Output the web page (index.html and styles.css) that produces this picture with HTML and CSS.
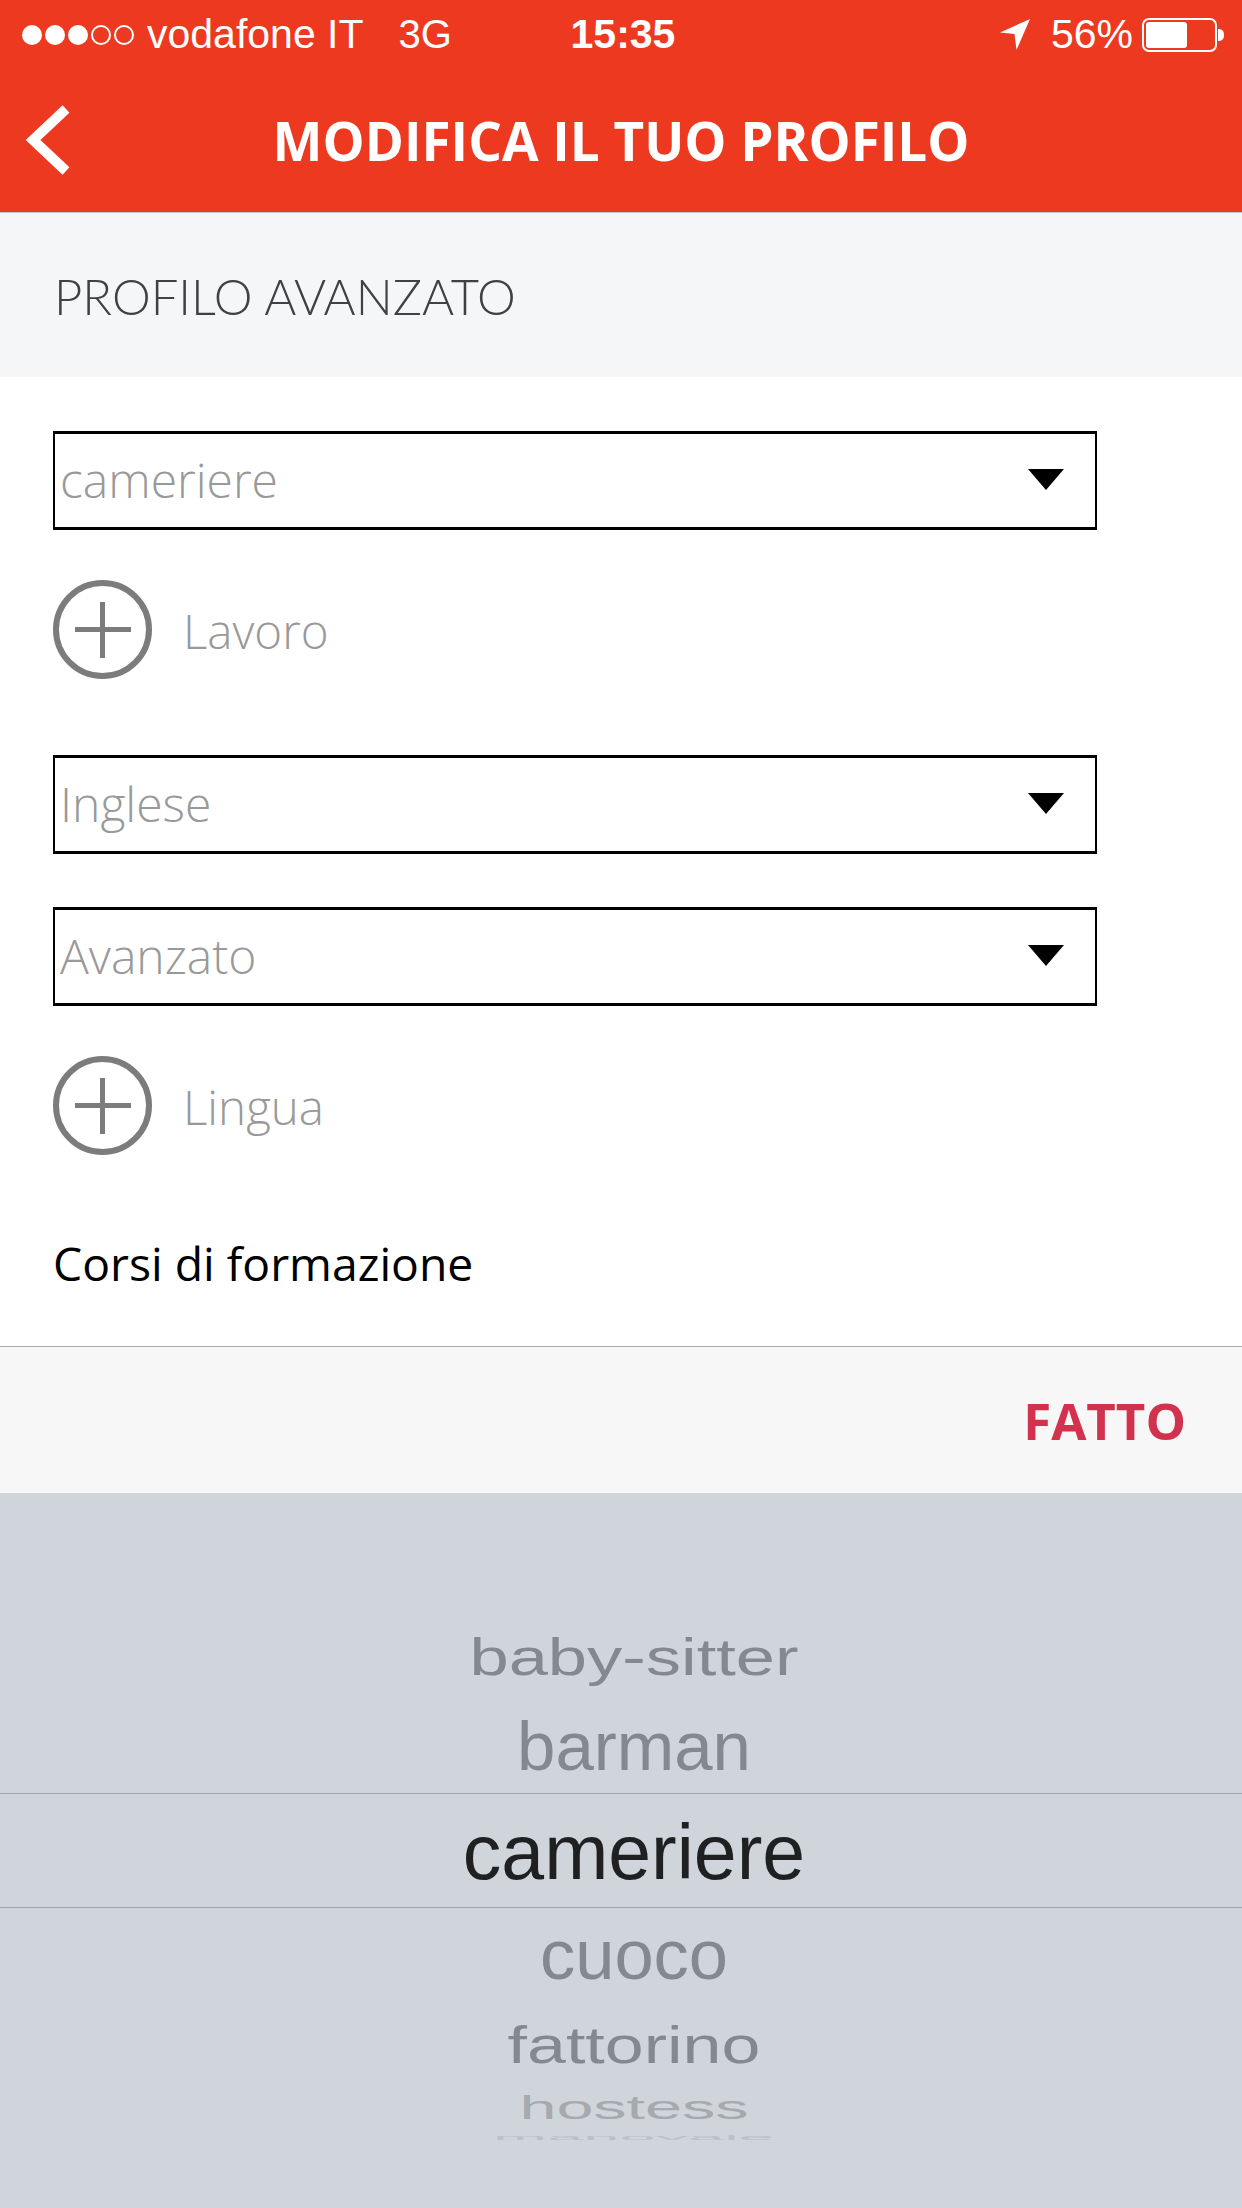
FILE: index.html

```html
<!DOCTYPE html>
<html lang="it">
<head>
  <meta charset="UTF-8">
  <meta name="viewport" content="width=device-width, initial-scale=1.0">
  <title>Modifica il tuo profilo</title>
  <link rel="stylesheet" href="styles.css">
</head>
<body>
  <header class="top">
    <div class="status">
      <div class="status-left">
        <svg class="signal" width="116" height="24" viewBox="0 0 116 24">
          <circle cx="12" cy="12" r="10" fill="#fff"/>
          <circle cx="35" cy="12" r="10" fill="#fff"/>
          <circle cx="58" cy="12" r="10" fill="#fff"/>
          <circle cx="81" cy="12" r="9" fill="none" stroke="#fff" stroke-width="2"/>
          <circle cx="104" cy="12" r="9" fill="none" stroke="#fff" stroke-width="2"/>
        </svg>
        <span class="carrier">vodafone IT</span>
        <span class="network">3G</span>
      </div>
      <div class="clock">15:35</div>
      <div class="status-right">
        <svg width="30" height="31" viewBox="0 0 30 31">
          <path d="M0 13.500L30 0L16.500 31L14.500 15Z" fill="#fff"/>
        </svg>
        <span class="battery-pct">56%</span>
        <svg width="82" height="34" viewBox="0 0 82 34">
          <rect x="1" y="1" width="73" height="32" rx="6" fill="none" stroke="#fff" stroke-width="2"/>
          <rect x="4" y="4" width="41" height="26" rx="3" fill="#fff"/>
          <path d="M76 11C80 11 82 13 82 17C82 21 80 23 76 23Z" fill="#fff"/>
        </svg>
      </div>
    </div>
    <nav class="nav">
      <svg class="back" width="50" height="72" viewBox="0 0 50 72">
        <path d="M41 5L8 36L41 67" fill="none" stroke="#fff" stroke-width="10"/>
      </svg>
      <h1>MODIFICA IL TUO PROFILO</h1>
      <span></span>
    </nav>
  </header>

  <h2 class="section-title">PROFILO AVANZATO</h2>

  <form class="form">
    <div class="select">cameriere<i class="caret"></i></div>
    <div class="add">
      <svg width="99" height="99" viewBox="0 0 99 99">
        <circle cx="49.500" cy="49.500" r="46.500" fill="none" stroke="#7c7c7c" stroke-width="6"/>
        <path d="M22 49.500H78M49.500 22V78" stroke="#7c7c7c" stroke-width="5"/>
      </svg>
      <span>Lavoro</span>
    </div>

    <div class="select group-start">Inglese<i class="caret"></i></div>
    <div class="select next">Avanzato<i class="caret"></i></div>
    <div class="add">
      <svg width="99" height="99" viewBox="0 0 99 99">
        <circle cx="49.500" cy="49.500" r="46.500" fill="none" stroke="#7c7c7c" stroke-width="6"/>
        <path d="M22 49.500H78M49.500 22V78" stroke="#7c7c7c" stroke-width="5"/>
      </svg>
      <span>Lingua</span>
    </div>

    <div class="courses">Corsi di formazione</div>
  </form>

  <div class="toolbar"><span class="done">FATTO</span></div>

  <div class="picker">
    <div class="row row-1"><span>baby-sitter</span></div>
    <div class="row row-2"><span>barman</span></div>
    <div class="row selected"><span>cameriere</span></div>
    <div class="row row-4"><span>cuoco</span></div>
    <div class="row row-5"><span>fattorino</span></div>
    <div class="row row-6"><span>hostess</span></div>
    <div class="row row-7"><span>manovale</span></div>
  </div>
</body>
</html>
```

FILE: styles.css

```css
* {
  box-sizing: border-box;
}
body {
  margin: 0;
  height: 2208px;
  overflow: hidden;
  display: flex;
  flex-direction: column;
  font-family: "Open Sans", sans-serif;
  background-color: #fff;
}

/* red top */
.top {
  height: 213px;
  background-color: #ee3921;
  color: #fff;
  border-bottom: 1px solid #c9c4c4;
}
.status {
  height: 68px;
  padding: 1px 18px 0 20px;
  display: grid;
  grid-template-columns: 1fr auto 1fr;
  align-items: center;
  font-family: "Liberation Sans", sans-serif;
  font-size: 41px;
}
.status-left, .status-right {
  display: flex;
  align-items: center;
}
.status-right {
  justify-content: flex-end;
}
.carrier {
  margin-left: 11px;
  font-size: 41px;
}
.network {
  margin-left: 35px;
  font-size: 40px;
}
.clock {
  font-weight: bold;
  font-size: 41px;
  margin-left: 2px;
}
.battery-pct {
  margin: 0 9px 0 21px;
}
.nav {
  height: 144px;
  display: grid;
  grid-template-columns: 1fr auto 1fr;
  align-items: center;
  padding-left: 25px;
}
.back {
  display: block;
}
.nav h1 {
  margin: 0 0 0 -25px;
  font-size: 53px;
  font-weight: bold;
}

.section-title {
  margin: 0;
  height: 164px;
  padding: 1px 0 0 54px;
  display: flex;
  align-items: center;
  font-family: Lato, sans-serif;
  font-size: 49px;
  font-weight: 300;
  color: #3f4244;
  background-color: #f5f6f8;
}

/* form */
.form {
  flex: none;
  height: 969px;
  padding: 54px 0 0 53px;
}
.select {
  width: 1044px;
  height: 99px;
  padding: 0 0 2px 5px;
  display: flex;
  align-items: center;
  justify-content: space-between;
  border: 2px solid #000;
  border-top-width: 3px;
  border-bottom-width: 3px;
  font-size: 48px;
  font-weight: 300;
  color: #999;
}
.group-start {
  margin-top: 76px;
}
.next {
  margin-top: 53px;
}
.caret {
  width: 0;
  height: 0;
  margin: 0 31px 0 0;
  border-left: 18px solid transparent;
  border-right: 18px solid transparent;
  border-top: 21px solid #000;
}
.add {
  margin-top: 50px;
  height: 99px;
  display: flex;
  align-items: center;
  gap: 31px;
  font-size: 47.500px;
  font-weight: 300;
  color: #999;
}
.add svg {
  display: block;
}
.add span {
  margin-top: 2px;
}
.courses {
  margin-top: 77px;
  font-size: 46.300px;
  color: #000;
}

.toolbar {
  flex: none;
  height: 147px;
  padding-right: 56px;
  display: flex;
  align-items: center;
  justify-content: flex-end;
  border-top: 1px solid #a9a9a9;
  background-color: #f7f7f7;
}
.done {
  font-size: 51px;
  font-weight: bold;
  color: #d3324f;
}

/* ios style wheel */
.picker {
  flex: 1;
  padding: 122px 0 0 26px;
  background-color: #d0d4db;
  font-family: "Liberation Sans", sans-serif;
  color: #85898e;
}
.row {
  margin-left: -26px;
  padding-left: 26px;
  display: flex;
  align-items: center;
  justify-content: center;
  line-height: 1;
}
.row span {
  display: block;
  white-space: nowrap;
}
.row-1 {
  height: 84px;
  font-size: 70.500px;
}
.row-1 span {
  transform: scaleY(0.74);
}
.row-2 {
  height: 94px;
  font-size: 69px;
}
.selected {
  height: 115px;
  padding-top: 4px;
  font-size: 77px;
  color: #1f2022;
  border-top: 1px solid #a3a7ab;
  border-bottom: 1px solid #a3a7ab;
}
.row-4 {
  height: 90px;
  padding-top: 4px;
  font-size: 70.500px;
}
.row-5 {
  height: 93px;
  font-size: 70px;
}
.row-5 span {
  transform: scaleY(0.73);
}
.row-6 {
  height: 34px;
  font-size: 66.500px;
  color: #a6aaaf;
}
.row-6 span {
  transform: scaleY(0.49);
}
.row-7 {
  height: 24px;
  font-size: 65px;
  color: #bcc0c6;
}
.row-7 span {
  transform: scaleY(0.11);
}
```
